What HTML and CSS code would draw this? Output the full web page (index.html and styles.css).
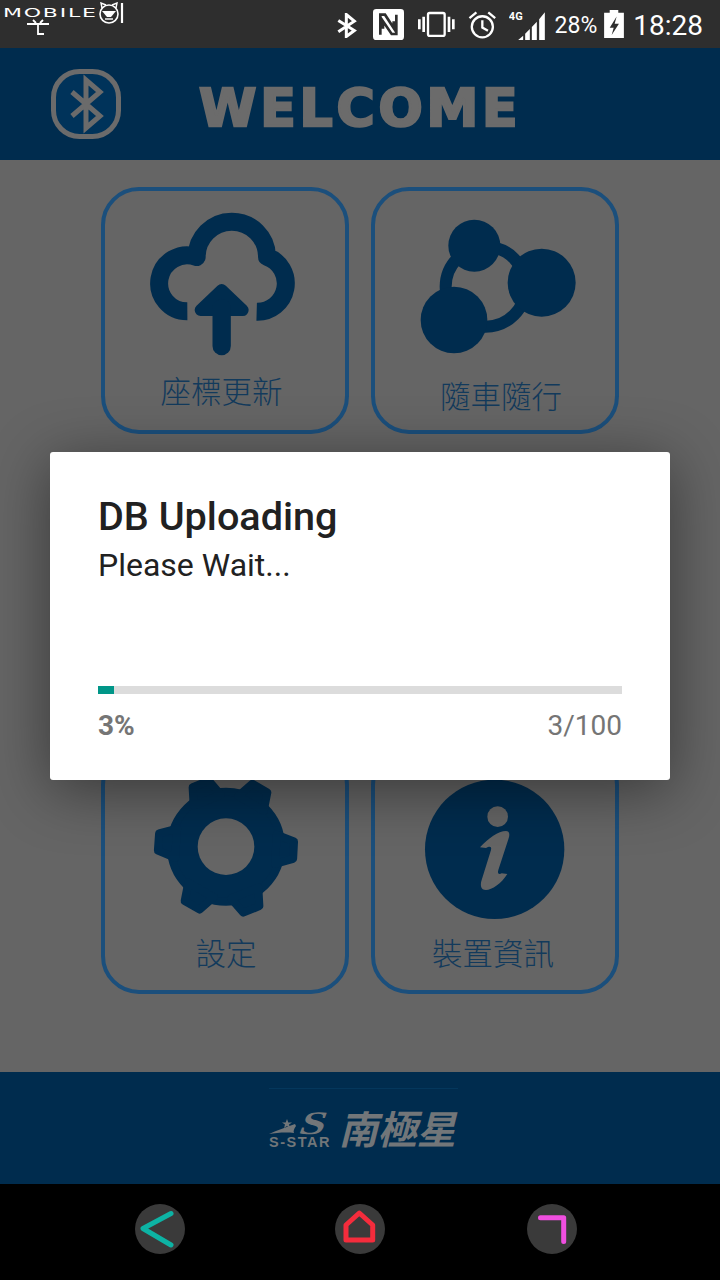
FILE: index.html
```html
<!DOCTYPE html>
<html lang="en">

<head>
  <meta charset="UTF-8" />
  <meta name="viewport" content="width=device-width, initial-scale=1.0" />
  <title>DB Uploading</title>
  <link rel="stylesheet" href="styles.css">
</head>

<body>
  <div class="screen">
    <div class="statusbar">
      <svg class="st-bt" viewBox="52 38 72 74"><path d="M56 60L104 90L80 108V42L104 62L56 94" fill="none" stroke="#fff" stroke-width="9" /></svg>
      <svg class="st-nfc" viewBox="160 25 99 93">
        <rect x="160" y="25" width="93" height="93" rx="10" fill="#fff" />
        <path d="M182 102V42H196L222 82V62M230 42V100H216L190 62V84" fill="none" stroke="#2e2e2e" stroke-width="8" />
      </svg>
      <svg class="st-vib" viewBox="295 30 114 78">
        <rect x="325" y="36" width="50" height="69" rx="5" fill="none" stroke="#fff" stroke-width="7" />
        <path d="M295 55h8v30h-8zM308 47h8v46h-8zM384 47h8v46h-8zM397 55h8v30h-8z" fill="#fff" />
      </svg>
      <svg class="st-alarm" viewBox="445 30 87 85">
        <circle cx="488" cy="78" r="32" fill="none" stroke="#fff" stroke-width="7" />
        <path d="M449 52L470 34M527 52L506 34M488 58V80L505 90" fill="none" stroke="#fff" stroke-width="7" />
      </svg>
      <svg class="st-signal" viewBox="568 25 107 90">
        <text x="567" y="54" class="st-4g">4G</text>
        <path d="M595 115L610 102V115ZM616 96L630 82V115H616ZM636 76L651 60V115H636ZM658 53L675 32V115H658Z" fill="#fff" />
      </svg>
      <span class="st-pct">28%</span>
      <svg class="st-batt" viewBox="855 30 60 85">
        <path d="M872 38V30H898V38H915V115H855V38Z" fill="#fff" />
        <path d="M893 50L872 84H884L878 106L900 72H887Z" fill="#2e2e2e" />
      </svg>
      <span class="st-time">18:28</span>
    </div>

    <div class="watermark">
      <span class="wm-text">MOBILE</span>
      <svg class="wm-face" viewBox="0 0 28 23">
        <circle cx="11" cy="12" r="9" fill="#2e2e2e" stroke="#fff" stroke-width="1.6" />
        <path d="M4 6L3 1L8 3M18 6L19 1L14 3" fill="none" stroke="#fff" stroke-width="1.4" />
        <path d="M4 9L18 9L13 15H9Z" fill="#fff" />
        <path d="M7 17H15" stroke="#fff" stroke-width="1.4" />
        <path d="M24 1V21" stroke="#fff" stroke-width="2.2" />
      </svg>
      <svg class="wm-ant" viewBox="0 0 24 17">
        <path d="M1 5H23M12 5V15H18M7 1L10 4M17 1L14 4" fill="none" stroke="#fff" stroke-width="1.8" />
      </svg>
    </div>

    <header class="header">
      <svg class="bt-badge" viewBox="0 0 70 70">
        <rect x="2.500" y="2.500" width="65" height="65" rx="26" fill="#00335a" stroke="#6b6b6b" stroke-width="5" />
        <path d="M21 23L49 47L35 59V11L49 23L21 47" fill="none" stroke="#6b6b6b" stroke-width="5" />
      </svg>
      <div class="welcome">WELCOME</div>
    </header>

    <main class="menu">
      <div class="card">
        <svg class="card-icon" viewBox="45 48 720 528">
          <path d="M292 409A84 84 0 1 1 320 246A105.500 105.500 0 0 1 531 245A85 85 0 0 1 500 410" fill="none" stroke="#002c4e" stroke-width="54" stroke-linejoin="round" />
          <path d="M332 405L395 345L458 405Z" fill="#002c4e" stroke="#002c4e" stroke-width="36" stroke-linejoin="round" />
          <path d="M395 400V513" stroke="#002c4e" stroke-width="55" stroke-linecap="round" />
        </svg>
        <div class="label label-update">座標更新</div>
      </div>

      <div class="card">
        <svg class="card-icon" viewBox="45 48 720 528">
          <circle cx="377" cy="335" r="120" fill="none" stroke="#002c4e" stroke-width="36" />
          <circle cx="343" cy="212" r="78" fill="#002c4e" />
          <circle cx="545" cy="323" r="102" fill="#002c4e" />
          <circle cx="282" cy="435" r="100" fill="#002c4e" />
        </svg>
        <div class="label label-follow">隨車隨行</div>
      </div>

      <div class="card"></div>
      <div class="card"></div>

      <div class="card">
        <svg class="card-icon" viewBox="45 -57 720 528">
          <g transform="translate(408 230)" fill="#002c4e" stroke="#002c4e" stroke-width="24" stroke-linejoin="round">
            <circle r="165" />
            <path transform="rotate(3)" d="M150 -44L203 -26V26L150 44Z" />
            <path transform="rotate(68)" d="M150 -44L203 -26V26L150 44Z" />
            <path transform="rotate(120)" d="M150 -44L203 -26V26L150 44Z" />
            <path transform="rotate(184)" d="M150 -44L203 -26V26L150 44Z" />
            <path transform="rotate(248)" d="M150 -44L203 -26V26L150 44Z" />
            <path transform="rotate(300)" d="M150 -44L203 -26V26L150 44Z" />
          </g>
          <circle cx="408" cy="230" r="85" fill="#656565" />
        </svg>
        <div class="label label-settings">設定</div>
      </div>

      <div class="card">
        <svg class="card-icon" viewBox="45 -57 720 528">
          <circle cx="404" cy="238" r="209" fill="#002c4e" />
          <circle cx="413" cy="140" r="31" fill="#656565" />
          <path d="M360 232C385 205 415 183 438 183C448 183 450 192 446 205L415 300C411 312 418 314 425 310L442 312C425 340 395 360 378 360C362 360 360 345 365 330L393 240C396 228 388 228 378 234Z" fill="#656565" />
        </svg>
        <div class="label label-info">裝置資訊</div>
      </div>
    </main>

    <footer class="footer">
      <div class="brand">
        <div class="brand-mark">
          <svg class="brand-swoosh" viewBox="0 0 62 24">
            <path d="M0 22C8 18 18 15 26 12L27 14C25 17 24 19 25 21C16 20 7 21 0 22Z" fill="#727679" />
            <path d="M18 7L19.300 10.500H23L20 12.500L21 16L18 14L15 16L16 12.500L13 10.500H16.700Z" fill="#727679" />
            <text class="brand-s" transform="translate(28 22) scale(1.4 1) skewX(-15)">S</text>
          </svg>
          <div class="brand-en">S-STAR</div>
        </div>
        <div class="brand-zh">南極星</div>
      </div>
    </footer>

    <nav class="navbar">
      <div class="nav-btn">
        <svg viewBox="0 0 50 50"><path d="M36 9.500L8 24.500L36 41" fill="none" stroke="#0db3a4" stroke-width="5" stroke-linecap="round" stroke-linejoin="round" /></svg>
      </div>
      <div class="nav-btn">
        <svg viewBox="0 0 50 50"><path d="M11 36V21L24.300 9L37.700 21V36Z" fill="none" stroke="#f52c3c" stroke-width="5" stroke-linejoin="round" /></svg>
      </div>
      <div class="nav-btn nav-recent">
        <svg viewBox="0 0 50 50"><path d="M13.500 13.700H36.700V37.500" fill="none" stroke="#f04fe0" stroke-width="5" stroke-linecap="round" stroke-linejoin="round" /></svg>
      </div>
    </nav>

    <div class="dialog">
      <div class="dialog-title">DB Uploading</div>
      <div class="dialog-msg">Please Wait...</div>
      <div class="progress">
        <div class="progress-fill" style="width: 3%"></div>
      </div>
      <div class="progress-info">
        <span class="progress-pct">3%</span>
        <span class="progress-count">3/100</span>
      </div>
    </div>
  </div>
</body>

</html>
```

FILE: styles.css
```css
body {
  margin: 0;
  font-family: Roboto, sans-serif;
  background: #000;
}

.screen {
  position: relative;
  width: 720px;
  height: 1280px;
  overflow: hidden;
  display: flex;
  flex-direction: column;
  background: #656565;
}

/* status bar */
.statusbar {
  height: 48px;
  flex: none;
  box-sizing: border-box;
  padding-right: 17px;
  background: #2e2e2e;
  color: #fff;
  display: flex;
  align-items: center;
  justify-content: flex-end;
  gap: 12px;
}

.st-bt {
  width: 24px;
  height: 25px;
  margin-top: 2px;
}

.st-nfc {
  width: 33px;
  height: 31px;
}

.st-vib {
  width: 38px;
  height: 26px;
}

.st-alarm {
  width: 29px;
  height: 28px;
  margin-top: 2px;
}

.st-signal {
  width: 36px;
  height: 30px;
  margin-top: 2px;
}

.st-4g {
  font-family: Roboto, sans-serif;
  font-size: 33px;
  font-weight: 700;
  fill: #fff;
}

.st-pct {
  font-size: 23px;
  margin-left: -2px;
  margin-top: 2px;
}

.st-batt {
  width: 20px;
  height: 28px;
  margin-left: -5px;
}

.st-time {
  font-size: 28px;
  margin-left: -3px;
  margin-top: 2px;
}

/* site watermark */
.watermark {
  position: absolute;
  left: 3px;
  top: 2px;
  width: 122px;
  height: 34px;
  color: #fff;
}

.wm-text {
  position: absolute;
  left: 0;
  top: 4px;
  font-family: "DejaVu Sans", sans-serif;
  font-size: 12.500px;
  line-height: 14px;
  letter-spacing: 1px;
  transform: scaleX(1.76);
  transform-origin: left center;
}

.wm-face {
  position: absolute;
  left: 95px;
  top: 0;
  width: 28px;
  height: 23px;
}

.wm-ant {
  position: absolute;
  left: 23px;
  top: 17px;
  width: 24px;
  height: 17px;
}

/* header */
.header {
  height: 112px;
  flex: none;
  box-sizing: border-box;
  padding: 0 0 0 51px;
  background: #002c4e;
  display: flex;
  align-items: center;
  gap: 78px;
}

.bt-badge {
  width: 70px;
  height: 70px;
  flex: none;
}

.welcome {
  margin-top: 8px;
  font-family: "DejaVu Sans", sans-serif;
  font-size: 52px;
  font-weight: bold;
  letter-spacing: 3.800px;
  color: #6b6b6b;
  -webkit-text-stroke: 2.500px #6b6b6b;
}

/* menu */
.menu {
  flex: 1;
  padding-top: 27px;
  display: grid;
  grid-template-columns: 248px 248px;
  grid-auto-rows: 247px;
  justify-content: center;
  gap: 33px 22px;
}

.card {
  box-sizing: border-box;
  border: 4px solid #1b4f7c;
  border-radius: 38px;
  display: flex;
  flex-direction: column;
  align-items: center;
}

.card-icon {
  width: 240px;
  height: 176px;
  flex: none;
}

.label {
  margin-top: 3px;
  font-family: "Noto Sans CJK TC", sans-serif;
  font-size: 30.500px;
  font-weight: 300;
  line-height: 40px;
  color: #123a5c;
}

.label-update {
  margin-right: 7px;
}

.label-follow {
  margin-top: 8px;
  margin-left: 12px;
}

.label-settings {
  margin-top: 5px;
  margin-left: 2px;
}

.label-info {
  margin-top: 5px;
  margin-right: 4px;
}

/* footer */
.footer {
  height: 112px;
  flex: none;
  background: #002c4e;
  display: flex;
  justify-content: center;
}

.brand {
  margin-top: 16px;
  padding: 23px 0 0;
  border-top: 1px solid #04375c;
  display: flex;
  gap: 10px;
  height: 50px;
  margin-left: 7px;
}

.brand-mark {
  width: 62px;
}

.brand-swoosh {
  display: block;
  width: 62px;
  height: 24px;
  overflow: visible;
}

.brand-s {
  font-family: "Liberation Serif", serif;
  font-size: 33px;
  font-weight: bold;
  fill: #727679;
}

.brand-en {
  font-family: "Liberation Sans", sans-serif;
  font-size: 14.500px;
  font-weight: bold;
  letter-spacing: 1.500px;
  line-height: 13px;
  color: #727679;
}

.brand-zh {
  margin-top: -4px;
  font-family: "Noto Sans CJK TC", sans-serif;
  font-size: 39px;
  font-weight: 700;
  line-height: 38px;
  color: #727679;
  transform: skewX(-14deg);
}

/* nav bar */
.navbar {
  height: 96px;
  flex: none;
  box-sizing: border-box;
  padding: 20px 0 0 135px;
  background: #000;
  display: flex;
  gap: 150px;
}

.nav-btn {
  width: 50px;
  height: 50px;
  border-radius: 50%;
  background: #3a3a3a;
}

.nav-btn svg {
  display: block;
  width: 50px;
  height: 50px;
}

.nav-recent {
  margin-left: -8px;
}

/* dialog */
.dialog {
  position: absolute;
  left: 50px;
  top: 452px;
  width: 620px;
  height: 328px;
  box-sizing: border-box;
  padding: 40px 48px 0;
  background: #fff;
  border-radius: 3px;
  box-shadow: 0 10px 60px rgba(0, 0, 0, 0.45);
}

.dialog-title {
  font-size: 39.600px;
  font-weight: 500;
  line-height: 50px;
  color: #212121;
}

.dialog-msg {
  font-size: 32px;
  line-height: 46px;
  color: #212121;
}

.progress {
  margin-top: 98px;
  height: 8px;
  background: #dcdcdc;
}

.progress-fill {
  height: 100%;
  background: #009688;
}

.progress-info {
  margin-top: 16px;
  display: flex;
  justify-content: space-between;
  font-size: 28px;
  line-height: 32px;
  color: #757575;
}

.progress-pct {
  font-weight: 700;
}
```
